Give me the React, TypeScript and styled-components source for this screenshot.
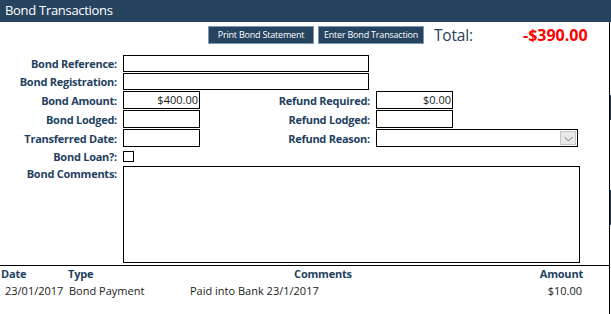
import styled, { createGlobalStyle } from "styled-components";

const GlobalStyle = createGlobalStyle`
  body {
    margin: 0;
    background: #ffffff;
    font-family: "Open Sans", "Noto Sans", sans-serif;
  }
`;

const transactions = [
  {
    date: "23/01/2017",
    type: "Bond Payment",
    comments: "Paid into Bank 23/1/2017",
    amount: "$10.00",
  },
];

export default function App() {
  return (
    <Page>
      <GlobalStyle />
      <TitleBar>Bond Transactions</TitleBar>
      <Body>
        <Main>
          <Toolbar>
            <ActionButton>Print Bond Statement</ActionButton>
            <ActionButton>Enter Bond Transaction</ActionButton>
            <TotalLabel>Total:</TotalLabel>
            <TotalValue>-$390.00</TotalValue>
          </Toolbar>

          <FormSection>
            <Form>
              <Label>Bond Reference:</Label>
              <TextBox $span={2} $width={246} />

              <Label $row={2}>Bond Registration:</Label>
              <TextBox $row={2} $span={2} $width={246} />

              <Label $row={3}>Bond Amount:</Label>
              <TextBox $row={3} $align="right">$400.00</TextBox>
              <Label $row={3} $col={3}>Refund Required:</Label>
              <TextBox $row={3} $col={4} $width={77} $align="right">
                $0.00
              </TextBox>

              <Label $row={4}>Bond Lodged:</Label>
              <TextBox $row={4} />
              <Label $row={4} $col={3}>Refund Lodged:</Label>
              <TextBox $row={4} $col={4} $width={77} />

              <Label $row={5}>Transferred Date:</Label>
              <TextBox $row={5} />
              <Label $row={5} $col={3}>Refund Reason:</Label>
              <Select $row={5}>
                <SelectArrow>
                  <svg width="9" height="6" viewBox="0 0 9 6">
                    <path d="M0.5 1 L4.5 5 L8.5 1" fill="none" stroke="#7a7a7a" strokeWidth="1" />
                  </svg>
                </SelectArrow>
              </Select>

              <Label $row={6}>Bond Loan?:</Label>
              <CheckBox $row={6} />

              <Label $row={7} $top>Bond Comments:</Label>
              <TextArea />
            </Form>
          </FormSection>

          <TableHead>
            <HeadCell $pad={1}>Date</HeadCell>
            <HeadCell $pad={1}>Type</HeadCell>
            <HeadCell $align="center">Comments</HeadCell>
            <HeadCell $align="right">Amount</HeadCell>
          </TableHead>
          {transactions.map((t) => (
            <TableRow key={t.date + t.amount}>
              <Cell $pad={5}>{t.date}</Cell>
              <Cell $pad={2}>{t.type}</Cell>
              <Cell $pad={3}>{t.comments}</Cell>
              <Cell $align="right">{t.amount}</Cell>
            </TableRow>
          ))}
        </Main>
        <EdgeStrip>
          <EdgeBlock $top={73} $height={25} />
          <EdgeBlock $top={168} $height={35} />
        </EdgeStrip>
      </Body>
    </Page>
  );
}

const Page = styled.div`
  width: 611px;
  height: 314px;
  overflow: hidden;
  display: flex;
  flex-direction: column;
  background: #ffffff;
`;

const TitleBar = styled.div`
  height: 22px;
  line-height: 21px;
  padding-left: 5px;
  background: #26445f;
  color: #ffffff;
  font-size: 13px;
  letter-spacing: -0.3px;
`;

const Body = styled.div`
  flex: 1;
  display: flex;
`;

const Main = styled.div`
  width: 609px;
  border-right: 1px solid #000000;
`;

const EdgeStrip = styled.div`
  position: relative;
  width: 1px;
`;

const EdgeBlock = styled.div<{ $top: number; $height: number }>`
  position: absolute;
  left: 0;
  top: ${(p) => p.$top}px;
  width: 1px;
  height: ${(p) => p.$height}px;
  background: #26445f;
`;

const Toolbar = styled.div`
  display: flex;
  align-items: center;
  height: 18px;
  margin-top: 4px;
  padding-left: 208px;
`;

const ActionButton = styled.button`
  height: 18px;
  width: 106px;
  padding: 0;
  margin-right: 4px;
  border: 1px solid #7d98b3;
  background: #26445f;
  color: #ffffff;
  font-family: "Open Sans", sans-serif;
  font-size: 9px;
  letter-spacing: -0.2px;
  line-height: 16px;
`;

const TotalLabel = styled.span`
  margin-left: 6px;
  width: 89px;
  color: #2c3e56;
  font-size: 15.5px;
  letter-spacing: -0.2px;
`;

const TotalValue = styled.span`
  color: #ff0000;
  font-weight: 700;
  font-size: 16px;
`;

const FormSection = styled.div`
  margin-top: 11px;
  padding-bottom: 2px;
  border-bottom: 1px solid #000000;
`;

const Form = styled.div`
  display: grid;
  grid-template-columns: 117px 77px 164px 203px;
  grid-template-rows: 17px 17px 18px 18px 18px 17px 97px;
  column-gap: 6px;
  row-gap: 1px;
`;

const Label = styled.div<{ $row?: number; $col?: number; $top?: boolean }>`
  grid-row: ${(p) => p.$row ?? 1};
  grid-column: ${(p) => p.$col ?? 1};
  text-align: right;
  align-self: ${(p) => (p.$top ? "start" : "center")};
  color: #233f5f;
  font-size: 11px;
  font-weight: 700;
  letter-spacing: -0.25px;
  white-space: nowrap;
`;

const TextBox = styled.div<{
  $row?: number;
  $col?: number;
  $span?: number;
  $width?: number;
  $align?: "left" | "right";
}>`
  grid-row: ${(p) => p.$row ?? 1};
  grid-column: ${(p) => p.$col ?? 2} / span ${(p) => p.$span ?? 1};
  width: ${(p) => (p.$width ? `${p.$width}px` : "auto")};
  box-sizing: border-box;
  border: 1px solid #000000;
  background: #ffffff;
  text-align: ${(p) => p.$align ?? "left"};
  padding: 0 1px;
  color: #1a1a1a;
  font-size: 11px;
  line-height: 15px;
`;

const Select = styled.div<{ $row: number }>`
  grid-row: ${(p) => p.$row};
  grid-column: 4;
  width: 202px;
  box-sizing: border-box;
  border: 1px solid #000000;
  display: flex;
  justify-content: flex-end;
  padding: 1px;
`;

const SelectArrow = styled.div`
  width: 16px;
  box-sizing: border-box;
  border: 1px solid #c6c6c6;
  background: #e8e8e8;
  display: flex;
  align-items: center;
  justify-content: center;
  padding-top: 2px;
`;

const CheckBox = styled.div<{ $row: number }>`
  grid-row: ${(p) => p.$row};
  grid-column: 2;
  align-self: center;
  width: 11px;
  height: 11px;
  box-sizing: border-box;
  border: 1px solid #000000;
`;

const TextArea = styled.div`
  grid-row: 7;
  grid-column: 2 / span 3;
  width: 457px;
  box-sizing: border-box;
  border: 1px solid #000000;
`;

const TableHead = styled.div`
  display: grid;
  grid-template-columns: 67px 120px 272px 124px;
  height: 14px;
  align-items: center;
`;

const HeadCell = styled.div<{ $pad?: number; $align?: "left" | "center" | "right" }>`
  padding-left: ${(p) => p.$pad ?? 0}px;
  text-align: ${(p) => p.$align ?? "left"};
  color: #233f5f;
  font-size: 11px;
  font-weight: 700;
  letter-spacing: -0.2px;
`;

const TableRow = styled.div`
  display: grid;
  grid-template-columns: 67px 120px 272px 123px;
  margin-top: 2px;
  height: 16px;
  align-items: center;
`;

const Cell = styled.div<{ $pad?: number; $align?: "left" | "right" }>`
  padding-left: ${(p) => p.$pad ?? 0}px;
  text-align: ${(p) => p.$align ?? "left"};
  color: #1a1a1a;
  font-size: 11px;
  white-space: nowrap;
`;
